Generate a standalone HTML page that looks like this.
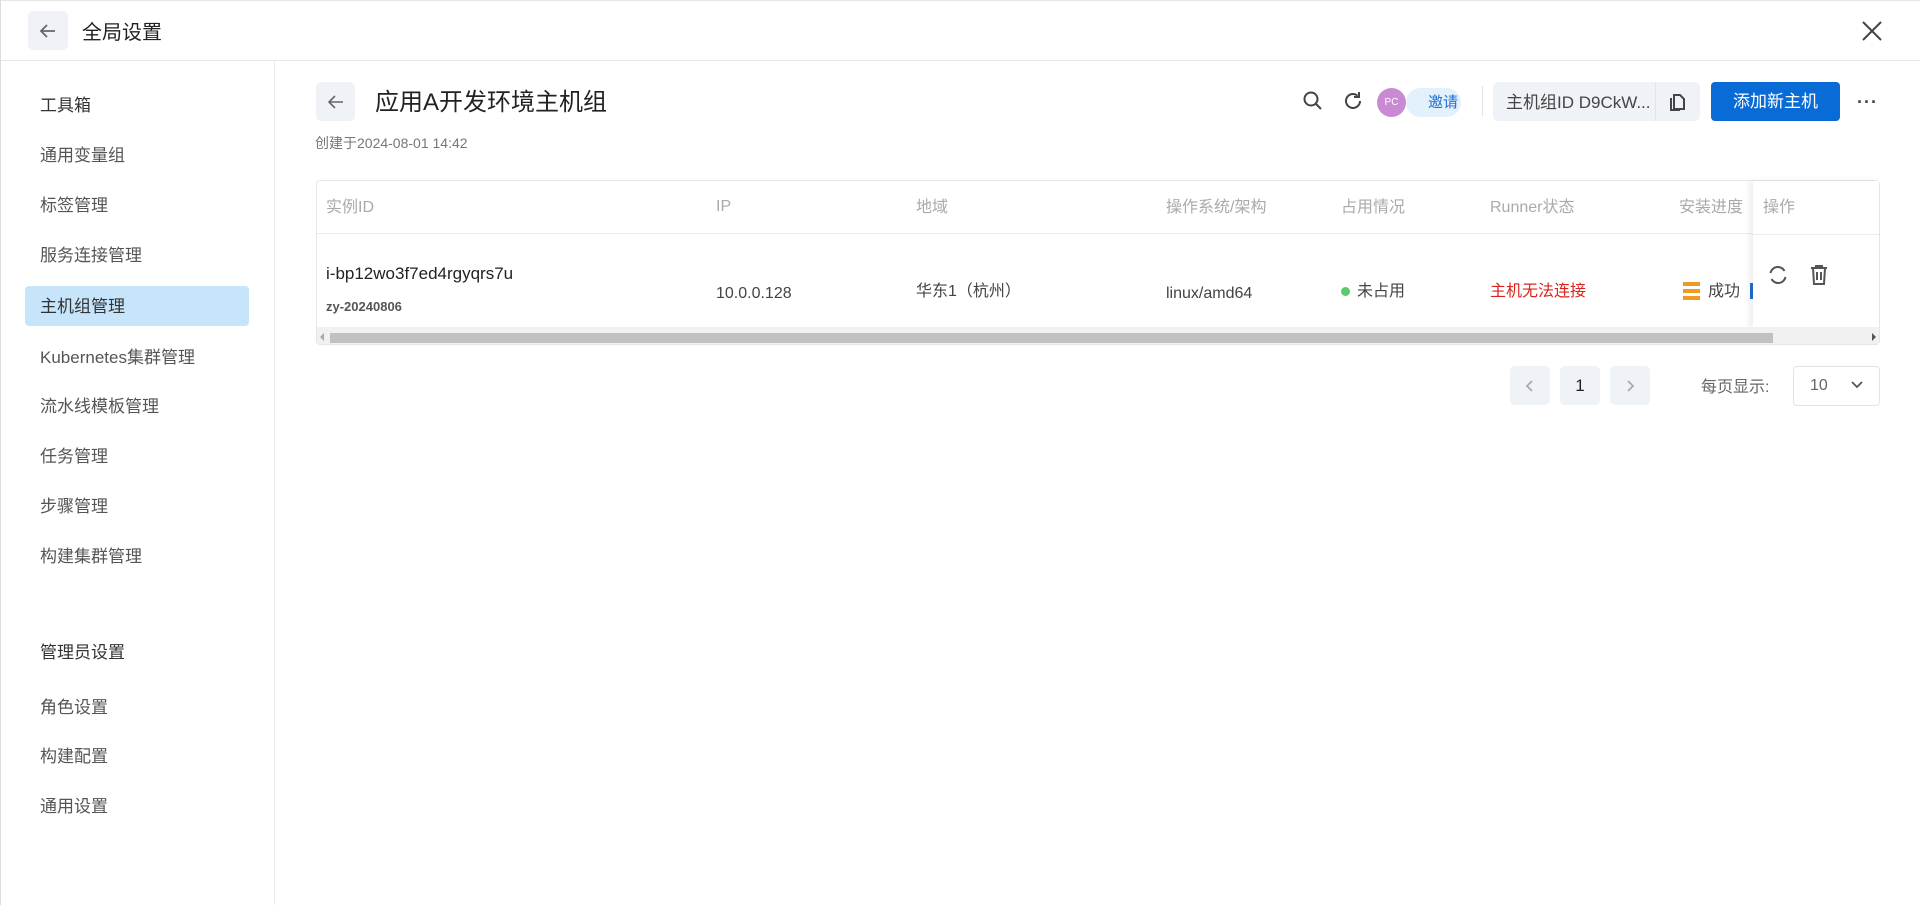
<!DOCTYPE html>
<html><head><meta charset="utf-8"><style>
*{box-sizing:border-box;margin:0;padding:0}
body{width:1920px;height:905px;background:#fff;font-family:"Liberation Sans","Noto Sans CJK SC",sans-serif;color:#333;position:relative;overflow:hidden}
.a{position:absolute;white-space:nowrap}
.btn{background:#eff2f6;border-radius:5px;display:flex;align-items:center;justify-content:center}
.side{font-size:17px;color:#333}
.th{font-size:16px;color:#aaa;top:193px}
.td{font-size:16px;color:#444;top:277px}
.tl{font-size:16px;color:#444;top:285px}
</style></head><body>
<div class="a" style="left:0;top:0;width:1920px;height:1px;background:#e6e6e6"></div>
<div class="a btn" style="left:28px;top:11px;width:40px;height:39px"><svg width="20" height="20" viewBox="0 0 20 20"><path d="M17 10H3M9 4L3 10l6 6" stroke="#666" stroke-width="1.8" fill="none"/></svg></div>
<div class="a" style="left:82px;top:16px;font-size:20px;color:#222">全局设置</div>
<svg class="a" style="left:1861px;top:20px" width="22" height="22" viewBox="0 0 22 22"><path d="M2 2L20 20M20 2L2 20" stroke="#444" stroke-width="2"/></svg>
<div class="a" style="left:0;top:60px;width:1920px;height:1px;background:#e8e8e8"></div>
<div class="a" style="left:274px;top:61px;width:1px;height:844px;background:#ececec"></div>
<div class="a" style="left:0;top:0;width:1px;height:905px;background:#ddd"></div>

<div class="a side" style="left:40px;top:91px">工具箱</div>
<div class="a side" style="left:40px;top:141px;color:#555">通用变量组</div>
<div class="a side" style="left:40px;top:191px;color:#555">标签管理</div>
<div class="a side" style="left:40px;top:241px;color:#555">服务连接管理</div>
<div class="a" style="left:25px;top:286px;width:224px;height:40px;background:#c6e5fb;border-radius:4px"></div>
<div class="a side" style="left:40px;top:292px">主机组管理</div>
<div class="a side" style="left:40px;top:343px;color:#555">Kubernetes集群管理</div>
<div class="a side" style="left:40px;top:392px;color:#555">流水线模板管理</div>
<div class="a side" style="left:40px;top:442px;color:#555">任务管理</div>
<div class="a side" style="left:40px;top:492px;color:#555">步骤管理</div>
<div class="a side" style="left:40px;top:542px;color:#555">构建集群管理</div>
<div class="a side" style="left:40px;top:638px">管理员设置</div>
<div class="a side" style="left:40px;top:693px;color:#555">角色设置</div>
<div class="a side" style="left:40px;top:742px;color:#555">构建配置</div>
<div class="a side" style="left:40px;top:792px;color:#555">通用设置</div>

<div class="a btn" style="left:316px;top:82px;width:39px;height:39px"><svg width="20" height="20" viewBox="0 0 20 20"><path d="M17 10H3M9 4L3 10l6 6" stroke="#666" stroke-width="1.6" fill="none"/></svg></div>
<div class="a" style="left:375px;top:82px;font-size:24px;color:#222">应用A开发环境主机组</div>
<div class="a" style="left:315px;top:133px;font-size:14px;color:#777">创建于2024-08-01 14:42</div>

<svg class="a" style="left:1302px;top:90px" width="22" height="22" viewBox="0 0 22 22"><circle cx="9" cy="9" r="6.5" stroke="#444" stroke-width="2" fill="none"/><path d="M14 14l5 5" stroke="#444" stroke-width="2"/></svg>
<svg class="a" style="left:1342px;top:90px" width="22" height="22" viewBox="0 0 22 22"><path d="M18 11a7 7 0 1 1-2.5-5.4" stroke="#444" stroke-width="2" fill="none"/><path d="M17 2v5h-5" stroke="#444" stroke-width="2" fill="none"/></svg>
<div class="a" style="left:1406px;top:88px;width:55px;height:29px;background:#e3f1fd;border-radius:15px;font-size:15px;color:#1f6fd0;padding-left:22px;line-height:29px">邀请</div>
<div class="a" style="left:1377px;top:88px;width:29px;height:29px;border-radius:50%;background:#c98ad3;color:#fff;font-size:10px;text-align:center;line-height:29px">PC</div>
<div class="a" style="left:1482px;top:86px;width:1px;height:30px;background:#e3e3e3"></div>
<div class="a" style="left:1493px;top:82px;width:207px;height:39px;background:#eff2f6;border-radius:5px"></div>
<div class="a" style="left:1506px;top:88px;font-size:17px;color:#444">主机组ID D9CkW...</div>
<div class="a" style="left:1655px;top:82px;width:1px;height:39px;background:#e0e3e8"></div>
<svg class="a" style="left:1667px;top:91px" width="20" height="22" viewBox="0 0 20 22"><path d="M7 4h6l4 4v10H7z" stroke="#444" stroke-width="2" fill="none"/><path d="M4 7v12h9" stroke="#444" stroke-width="2" fill="none"/></svg>
<div class="a" style="left:1711px;top:82px;width:129px;height:39px;background:#086bd6;border-radius:4px;color:#fff;font-size:17px;text-align:center;line-height:39px">添加新主机</div>
<div class="a" style="left:1857px;top:92px;font-size:18px;color:#444;font-weight:bold;letter-spacing:1px">···</div>

<div class="a" style="left:316px;top:180px;width:1564px;height:165px;border:1px solid #e6e6e6;border-radius:4px"></div>
<div class="a" style="left:317px;top:233px;width:1436px;height:1px;background:#ececec"></div>
<div class="a th" style="left:326px">实例ID</div>
<div class="a" style="left:716px;top:198px;font-size:16px;color:#aaa">IP</div>
<div class="a th" style="left:916px">地域</div>
<div class="a th" style="left:1166px">操作系统/架构</div>
<div class="a th" style="left:1341px">占用情况</div>
<div class="a th" style="left:1490px">Runner状态</div>
<div class="a th" style="left:1679px">安装进度</div>
<div class="a" style="left:326px;top:264px;font-size:17px;color:#222">i-bp12wo3f7ed4rgyqrs7u</div>
<div class="a" style="left:326px;top:299px;font-size:13px;color:#555;font-weight:bold">zy-20240806</div>
<div class="a tl" style="left:716px">10.0.0.128</div>
<div class="a td" style="left:916px">华东1（杭州）</div>
<div class="a tl" style="left:1166px">linux/amd64</div>
<div class="a" style="left:1341px;top:287px;width:9px;height:9px;border-radius:50%;background:#5cca6a"></div>
<div class="a td" style="left:1357px">未占用</div>
<div class="a td" style="left:1490px;color:#d9231d">主机无法连接</div>
<div class="a" style="left:1683px;top:282px;width:17px;height:4px;background:#ee9a25"></div>
<div class="a" style="left:1683px;top:289px;width:17px;height:4px;background:#ee9a25"></div>
<div class="a" style="left:1683px;top:296px;width:17px;height:4px;background:#ee9a25"></div>
<div class="a td" style="left:1708px">成功</div>
<div class="a" style="left:1750px;top:283px;width:3px;height:16px;background:#1f6fd0"></div>
<div class="a" style="left:1753px;top:181px;width:126px;height:146px;background:#fff;box-shadow:-4px 0 6px rgba(0,0,0,0.07)"></div>
<div class="a" style="left:1753px;top:234px;width:126px;height:1px;background:#ececec"></div>
<div class="a th" style="left:1763px">操作</div>
<svg class="a" style="left:1767px;top:264px" width="22" height="22" viewBox="0 0 22 22"><path d="M3.5 9a7.5 7.5 0 0 1 14-2M18.5 13a7.5 7.5 0 0 1-14 2" stroke="#555" stroke-width="2" fill="none"/></svg>
<svg class="a" style="left:1809px;top:264px" width="20" height="22" viewBox="0 0 20 22"><path d="M2 4h16M7 4V2h6v2M4 4l1 16h10l1-16M8 8v8M12 8v8" stroke="#555" stroke-width="2" fill="none"/></svg>
<div class="a" style="left:317px;top:327px;width:1562px;height:17px;background:#f1f1f1"></div>
<div class="a" style="left:330px;top:333px;width:1443px;height:10px;background:#c1c1c1"></div>
<div class="a" style="left:1872px;top:333px;width:0;height:0;border-left:4px solid #555;border-top:4px solid transparent;border-bottom:4px solid transparent"></div>
<div class="a" style="left:320px;top:333px;width:0;height:0;border-right:4px solid #aaa;border-top:4px solid transparent;border-bottom:4px solid transparent"></div>

<div class="a btn" style="left:1510px;top:366px;width:40px;height:39px"><svg width="12" height="14" viewBox="0 0 12 14"><path d="M8 2L3 7l5 5" stroke="#aaa" stroke-width="1.8" fill="none"/></svg></div>
<div class="a btn" style="left:1560px;top:366px;width:40px;height:39px;color:#222;font-size:17px">1</div>
<div class="a btn" style="left:1610px;top:366px;width:40px;height:39px"><svg width="12" height="14" viewBox="0 0 12 14"><path d="M4 2l5 5-5 5" stroke="#aaa" stroke-width="1.8" fill="none"/></svg></div>
<div class="a" style="left:1701px;top:373px;font-size:16px;color:#666">每页显示:</div>
<div class="a" style="left:1793px;top:366px;width:87px;height:40px;border:1px solid #e3e3e3;border-radius:4px"></div>
<div class="a" style="left:1810px;top:377px;font-size:16px;color:#666">10</div>
<svg class="a" style="left:1850px;top:380px" width="14" height="10" viewBox="0 0 14 10"><path d="M2 2l5 5 5-5" stroke="#555" stroke-width="1.8" fill="none"/></svg>
</body></html>
